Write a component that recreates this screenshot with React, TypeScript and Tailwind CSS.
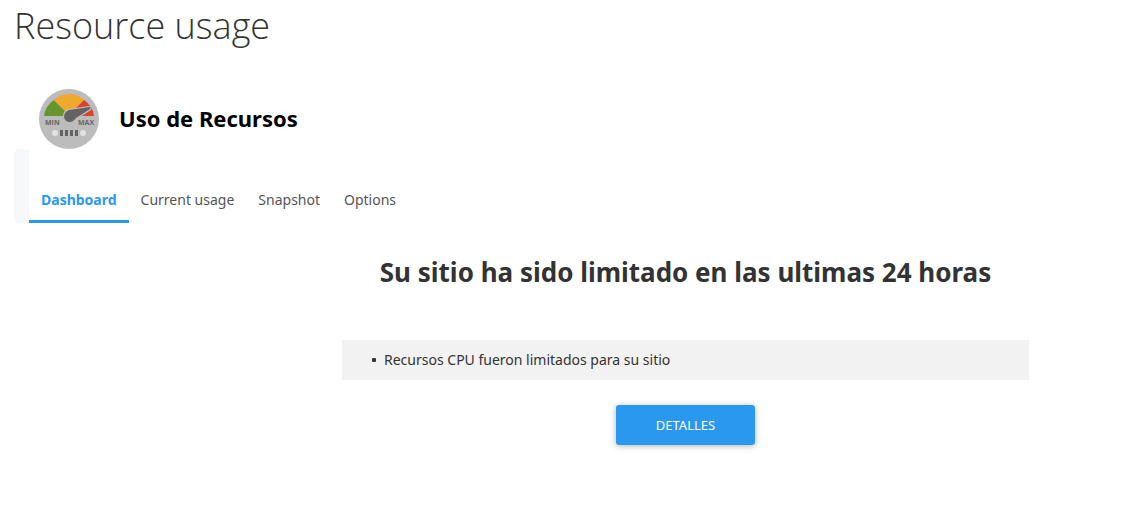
import React from 'react';
import clsx from 'clsx';

const tabs = ['Dashboard', 'Current usage', 'Snapshot', 'Options'];

const GaugeLogo: React.FC = () => (
  <svg viewBox="0 0 60 60" className="h-[60px] w-[60px] shrink-0" aria-hidden="true">
    <circle cx="30" cy="30" r="30" fill="#bcbcbc" />
    <path d="M5 27 Q6 17 15 11 L26 22 V27 Z" fill="#67962f" />
    <path d="M15 11 Q21 5 30 5 Q39 5 45 11 L35 21 L30 23 L25 21 Z" fill="#f0a92d" />
    <path d="M45 11 Q54 17 55 27 H40 L35 21 Z" fill="#d9432f" />
    <path
      d="M50 17 L29 20 Q24 22 24 27 Q25 34 31 34 Q35 34 38 30 L52 21 Q54 17 50 17 Z"
      fill="#bcbcbc"
    />
    <path
      d="M51 18 L30 21 Q25 23 25 28 Q26 33 31 33 Q34 33 37 29 L51 20 Q52 18 51 18 Z"
      fill="#636363"
    />
    <g fill="#666666" fontFamily='"Open Sans", sans-serif' fontSize="7" fontWeight="700">
      <text x="6" y="36">MIN</text>
      <text x="39" y="36">MAX</text>
    </g>
    <circle cx="16" cy="44" r="3" fill="#e2e2e2" />
    <circle cx="44" cy="44" r="3" fill="#e2e2e2" />
    <path d="M21 41h3v6h-3z M26 41h3v6h-3z M31 41h3v6h-3z M36 41h3v6h-3z" fill="#636363" />
  </svg>
);

const TabBar: React.FC = () => (
  <div className="rounded-[5px] bg-[#f7f8fa] pl-[15px]">
    <nav className="flex bg-white pt-7">
      {tabs.map((tab, index) => (
        <button
          key={tab}
          type="button"
          className={clsx(
            'border-b-[3px] px-3 pt-3 pb-2.5 text-sm leading-[21px]',
            index === 0
              ? 'border-[#2b98f0] font-bold text-[#2b98f0]'
              : 'border-transparent text-[#555555]'
          )}
        >
          {tab}
        </button>
      ))}
    </nav>
  </div>
);

const App: React.FC = () => {
  return (
    <div className="bg-white pb-[60px] pl-3.5 font-['Noto_Sans',sans-serif] text-[#333333]">
      <h1 className="pt-0.5 font-['Open_Sans',sans-serif] text-[36px] leading-[48px] font-light">
        Resource usage
      </h1>

      <header className="mt-[39px] flex items-center gap-5 pl-[25px]">
        <GaugeLogo />
        <h2 className="pb-0.5 text-[22px] leading-[30px] font-bold text-black">Uso de Recursos</h2>
      </header>

      <TabBar />

      <main className="mr-[94px] ml-[328px] flex flex-col items-center">
        <h3 className="mt-[31px] text-center text-[26px] leading-9 font-bold">
          Su sitio ha sido limitado en las ultimas 24 horas
        </h3>
        <ul className="mt-[50px] w-full bg-[#f2f2f2] py-2.5 pl-[30px] text-sm leading-5">
          <li className="flex items-center gap-2">
            <span className="h-1 w-1 rounded-[1px] bg-[#333333]" />
            Recursos CPU fueron limitados para su sitio
          </li>
        </ul>
        <button
          type="button"
          className="mt-[25px] h-10 rounded-[3px] bg-[#2b98f0] px-10 pt-0.5 text-[13px] text-white shadow-[0_1px_6px_rgba(0,0,0,0.3)]"
        >
          DETALLES
        </button>
      </main>
    </div>
  );
};

export default App;
